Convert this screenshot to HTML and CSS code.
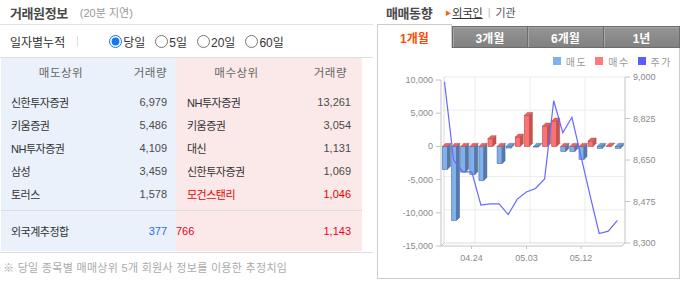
FILE: index.html
```html
<!DOCTYPE html>
<html lang="ko">
<head>
  <meta charset="UTF-8">
  <meta name="viewport" content="width=device-width, initial-scale=1.0">
  <title>거래원정보 / 매매동향</title>
  <link rel="stylesheet" href="styles.css">
</head>
<body>
  <div class="wrap">
    <section class="trader">
      <div class="trader-head">
        <h2>거래원정보</h2>
        <span class="delay">(20분 지연)</span>
      </div>
      <div class="period">
        <span class="period-label">일자별누적</span>
        <span class="sep"></span>
        <label><input type="radio" name="period" checked>당일</label>
        <label><input type="radio" name="period">5일</label>
        <label><input type="radio" name="period">20일</label>
        <label><input type="radio" name="period">60일</label>
      </div>

      <div class="rank">
        <div class="rank-head">
          <div class="half sell"><span>매도상위</span><span>거래량</span></div>
          <div class="half buy"><span>매수상위</span><span>거래량</span></div>
        </div>
        <div class="rank-body">
          <div class="half sell">
            <span class="name">신한투자증권</span><span class="num">6,979</span>
            <span class="name">키움증권</span><span class="num">5,486</span>
            <span class="name">NH투자증권</span><span class="num">4,109</span>
            <span class="name">삼성</span><span class="num">3,459</span>
            <span class="name">토러스</span><span class="num">1,578</span>
          </div>
          <div class="half buy">
            <span class="name">NH투자증권</span><span class="num">13,261</span>
            <span class="name">키움증권</span><span class="num">3,054</span>
            <span class="name">대신</span><span class="num">1,131</span>
            <span class="name">신한투자증권</span><span class="num">1,069</span>
            <span class="name foreign">모건스탠리</span><span class="num foreign">1,046</span>
          </div>
        </div>
        <div class="rank-total">
          <div class="half sell"><span class="name">외국계추정합</span><span class="num down">377</span></div>
          <div class="half buy"><span class="num up">766</span><span class="num up">1,143</span></div>
        </div>
      </div>
      <p class="note">※ 당일 종목별 매매상위 5개 회원사 정보를 이용한 추정치임</p>
    </section>

    <section class="trend">
      <div class="trend-head">
        <h2>매매동향</h2>
        <span class="arrow">▶</span><a class="on">외국인</a><span class="bar">|</span><a>기관</a>
      </div>
      <div class="tabs">
        <span class="tab active">1개월</span>
        <span class="tab">3개월</span>
        <span class="tab">6개월</span>
        <span class="tab">1년</span>
      </div>
      <div class="chart-box">
        <div class="legend">
          <span class="key"><i class="sell"></i>매도</span>
          <span class="key"><i class="buy"></i>매수</span>
          <span class="key"><i class="price"></i>주가</span>
        </div>
        <svg id="chart" width="301" height="208" viewBox="378 70 301 208"></svg>
      </div>
    </section>
  </div>

  <script>
    // 외국인 순매수(거래량)와 종가, 최근 20거래일
    const net = [-3460, -11150, -3870, -4260, -5120, 1160, -2600, -250, 1400, 4670,
                 -100, 3060, 3810, -750, -750, -1960, 800, -300, 30, -300];
    const price = [8980, 8650, 8600, 8600, 8460, 8465, 8465, 8420, 8485, 8515,
                   8530, 8570, 8900, 8765, 8830, 8665, 8500, 8340, 8350, 8395];

    const NS = "http://www.w3.org/2000/svg";
    const chart = document.getElementById("chart");
    const D = 3; // 3D 깊이

    function add(tag, attrs, text) {
      const el = document.createElementNS(NS, tag);
      for (const k in attrs) el.setAttribute(k, attrs[k]);
      if (text) el.textContent = text;
      chart.appendChild(el);
      return el;
    }
    const vy = v => 80 + (10000 - v) * 166 / 25000;
    const py = p => 77 + (9000 - p) * 166 / 700;
    const bx = i => 442.5 + 9.1 * i;
    const pts = a => a.map(p => p.join(",")).join(" ");

    // 뒷벽 격자
    [10000, 5000, 0, -5000, -10000].forEach(v => {
      add("line", { x1: 444, x2: 625, y1: vy(v) - D, y2: vy(v) - D, class: "grid" });
    });
    [475, 530, 585].forEach(x => add("line", { x1: x, x2: x, y1: 77, y2: 243, class: "grid" }));
    add("line", { x1: 444, x2: 444, y1: 77, y2: 243, class: "wall" });
    add("line", { x1: 444, x2: 625, y1: 243, y2: 243, class: "wall" });

    // 축
    add("line", { x1: 441, x2: 441, y1: 80, y2: 246, class: "axis" });
    add("line", { x1: 441, x2: 622, y1: 246, y2: 246, class: "axis" });
    add("line", { x1: 622, x2: 625, y1: 246, y2: 243, class: "axis" });
    add("line", { x1: 441, x2: 444, y1: 246, y2: 243, class: "axis" });
    add("line", { x1: 625, x2: 625, y1: 77, y2: 243, class: "axis" });

    [10000, 5000, 0, -5000, -10000, -15000].forEach(v => {
      add("line", { x1: 436, x2: 441, y1: vy(v), y2: vy(v), class: "axis" });
      add("text", { x: 433, y: vy(v) + 3, "text-anchor": "end" }, v.toLocaleString("en-US"));
    });
    [9000, 8825, 8650, 8475, 8300].forEach(p => {
      add("line", { x1: 625, x2: 630, y1: py(p), y2: py(p), class: "axis" });
      add("text", { x: 633, y: py(p) + 3 }, p.toLocaleString("en-US"));
    });
    [["04.24", 471.5], ["05.03", 526.5], ["05.12", 581]].forEach(([t, x]) => {
      add("line", { x1: x, x2: x, y1: 246, y2: 249, class: "axis" });
      add("text", { x: x, y: 261, "text-anchor": "middle" }, t);
    });

    // 막대
    net.forEach((v, i) => {
      const x = bx(i), w = 5, z = vy(0), y = vy(v);
      if (v >= 0) {
        add("rect", { x: x, y: y, width: w, height: z - y, class: "buy-front" });
        add("polygon", { points: pts([[x + w, y], [x + w + D, y - D], [x + w + D, z - D], [x + w, z]]), class: "buy-side" });
        add("polygon", { points: pts([[x, y], [x + D, y - D], [x + w + D, y - D], [x + w, y]]), class: "buy-top" });
      } else {
        add("rect", { x: x, y: z, width: w, height: y - z, class: "sell-front" });
        add("polygon", { points: pts([[x + w, z], [x + w + D, z - D], [x + w + D, y - D], [x + w, y]]), class: "sell-side" });
        const cap = v > -400 ? "sell-top" : "buy-top";
        add("polygon", { points: pts([[x, z], [x + D, z - D], [x + w + D, z - D], [x + w, z]]), class: cap });
      }
    });

    // 주가
    add("polyline", { points: pts(price.map((p, i) => [bx(i) + 2, py(p)])), class: "price-line" });
  </script>
</body>
</html>
```

FILE: styles.css
```css
body {
  margin: 0;
  font-family: "Liberation Sans", "Noto Sans CJK KR", sans-serif;
  font-size: 12px;
  color: #333;
  background: #fff;
}
.wrap {
  display: flex;
  align-items: flex-start;
}

/* 거래원정보 */
.trader {
  width: 373px;
}
.trader-head {
  display: flex;
  align-items: center;
  height: 24px;
  padding-left: 10px;
  border-bottom: 1px solid #e2e2e2;
}
.trader-head h2,
.trend-head h2 {
  margin: 0;
  font-size: 13px;
  font-weight: bold;
  letter-spacing: -0.4px;
  color: #4a4a4a;
}
.delay {
  margin-left: 12px;
  font-size: 11px;
  color: #999;
}
.period {
  display: flex;
  align-items: center;
  height: 32px;
  padding-left: 10px;
  border-bottom: 1px solid #ddd;
}
.period-label {
  font-size: 12px;
  color: #333;
}
.sep {
  width: 1px;
  height: 11px;
  margin: 0 31px 0 12px;
  background: #ddd;
}
.period label {
  display: inline-flex;
  align-items: center;
  margin-right: 10px;
  font-size: 12px;
  color: #333;
}
.period input {
  width: 13px;
  height: 13px;
  margin: 0 1px 0 0;
  accent-color: #1677f2;
}

.rank {
  width: 361px;
  margin: 0 0 1px 1px;
}
.rank-head,
.rank-body,
.rank-total {
  display: grid;
  grid-template-columns: 175px 186px;
}
.half {
  display: grid;
  grid-template-columns: 1fr auto;
  align-items: center;
}
.half.sell {
  padding: 0 9px 0 10px;
}
.half.buy {
  padding: 0 11px 0 11px;
}
.rank-head {
  height: 28px;
  background: #f6f6f6;
  font-size: 11.5px;
  letter-spacing: 0.5px;
  color: #666;
}
.rank-head .half {
  grid-template-columns: 100px 1fr;
}
.rank-head .half.sell span:first-child {
  text-align: center;
}
.rank-head .half.buy span:first-child {
  text-align: center;
  margin-left: -1px;
}
.rank-head .half span:last-child {
  text-align: right;
}
.rank-head .half.buy span:last-child {
  padding-right: 4px;
}
.rank-body .half {
  grid-auto-rows: 23px;
  padding-top: 4px;
  padding-bottom: 5px;
}
.rank-body,
.rank-total {
  font-size: 11px;
}
.sell {
  background: #eaf1fb;
}
.buy {
  background: #fbe9e9;
}
.name {
  letter-spacing: -0.5px;
  color: #333;
}
.num {
  text-align: right;
  color: #4b4b4b;
}
.foreign {
  color: #e60000;
}
.rank-total {
  height: 40px;
  border-top: 1px solid #ddd;
}
.rank-total .half.buy {
  padding-left: 0;
}
.rank-total .num.up:first-child {
  text-align: left;
}
.up {
  color: #e8001c;
}
.down {
  color: #1f6bf2;
}
.note {
  margin: 0;
  padding: 8px 0 0 3px;
  line-height: 15px;
  border-top: 1px solid #ddd;
  font-size: 11px;
  letter-spacing: 0.3px;
  color: #aaa;
}

/* 매매동향 */
.trend {
  width: 303px;
  margin-left: 4px;
}
.trend-head {
  display: flex;
  align-items: center;
  height: 24px;
  padding-left: 9px;
  font-size: 11px;
}
.arrow {
  margin: 0 1px 0 13px;
  font-size: 6px;
  color: #f60;
}
.trend-head a {
  color: #555;
}
.trend-head a.on {
  color: #333;
  text-decoration: underline;
}
.trend-head .bar {
  margin: 0 5px;
  color: #bbb;
}
.tabs {
  display: flex;
  align-items: flex-end;
  height: 24px;
}
.tab {
  box-sizing: border-box;
  display: flex;
  align-items: center;
  justify-content: center;
  width: 76px;
  height: 22px;
  border: 1px solid #6c6c6c;
  border-left: none;
  background: linear-gradient(#959595, #818181);
  box-shadow: inset 1px 1px 0 #a6a6a6;
  font-size: 12px;
  font-weight: bold;
  color: #fff;
}
.tab:nth-child(2) {
  border-left: 1px solid #6c6c6c;
}
.tab.active {
  width: 75px;
  height: 24px;
  border: 1px solid #ccc;
  border-bottom: none;
  background: #fff;
  box-shadow: none;
  padding-top: 2px;
  color: #ff4a00;
}
.chart-box {
  box-sizing: border-box;
  width: 303px;
  height: 231px;
  border: 1px solid #ccc;
  border-top: none;
}
.legend {
  display: flex;
  justify-content: flex-end;
  align-items: center;
  height: 22px;
  padding: 4px 7px 0 0;
  box-sizing: border-box;
  font-size: 10px;
  letter-spacing: 1.5px;
  color: #999;
}
.key {
  display: inline-flex;
  align-items: center;
  margin-left: 8px;
}
.key i {
  width: 8px;
  height: 8px;
  margin-right: 5px;
}
.key i.sell {
  background: #7fb0ef;
}
.key i.buy {
  background: #ff7b7b;
}
.key i.price {
  background: #5c5cff;
}
#chart {
  display: block;
}
#chart text {
  font-family: "Liberation Sans", sans-serif;
  font-size: 9px;
  fill: #8a8a8a;
}
#chart .grid {
  stroke: #ececec;
  stroke-width: 1;
}
#chart .wall {
  stroke: #dadada;
}
#chart .axis {
  stroke: #c4c4c4;
}
#chart .sell-front {
  fill: #7fb0ef;
  stroke: #4c6d98;
  stroke-width: 0.6;
}
#chart .sell-side {
  fill: #5479a8;
  stroke: #4c6d98;
  stroke-width: 0.5;
}
#chart .sell-top {
  fill: #6f9cd8;
  stroke: #4c6d98;
  stroke-width: 0.5;
}
#chart .buy-front {
  fill: #ff7272;
  stroke: #b44a4a;
  stroke-width: 0.6;
}
#chart .buy-side {
  fill: #c45252;
  stroke: #b44a4a;
  stroke-width: 0.5;
}
#chart .buy-top {
  fill: #e86464;
  stroke: #b44a4a;
  stroke-width: 0.5;
}
#chart .price-line {
  fill: none;
  stroke: #6868ff;
  stroke-width: 1.2;
}
```
